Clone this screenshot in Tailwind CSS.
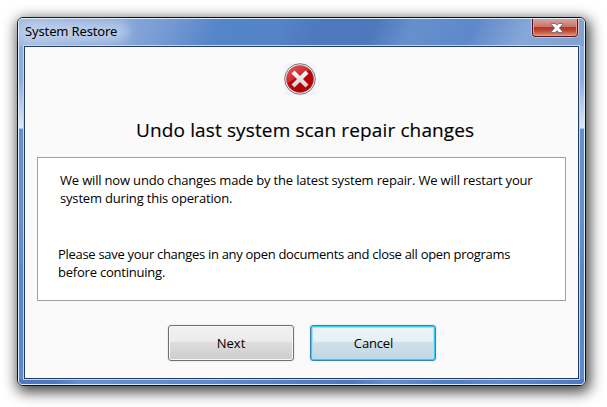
<!DOCTYPE html>
<html lang="en">
<head>
<meta charset="utf-8">
<title>System Restore</title>
<script src="https://cdn.jsdelivr.net/npm/@tailwindcss/browser@4"></script>
</head>
<body class="bg-white w-[607px] h-[407px] overflow-hidden pl-[17px] pt-[17px] text-black font-['Open_Sans','Noto_Sans',sans-serif]">
<div class="w-[569px] h-[369px] rounded-[6px] border border-[#080f1a] shadow-[2px_4px_14px_2px_rgba(0,0,0,0.75)]">
  <div class="relative w-full h-full rounded-[5px] border border-[#dcecf8] px-[4px] pb-[4px] flex flex-col bg-[linear-gradient(180deg,#8fabdc_0px,#8fabdc_60px,#dbe6f5_107px,#e0e9f5_109px,#668fcd_110px,#6690d0_200px,#5b87ca_260px,#5d8ace_100%)]">
    <div class="absolute inset-x-0 top-0 h-[27px] rounded-t-[4px] bg-[linear-gradient(115deg,#a1b9e1_0px,#8dabdb_90px,#7499d2_140px,#5485c9_185px,#5583c8_240px,#4d7abd_275px,#4d79bc_325px,#6690cd_360px,#5d89ca_415px,#87a7d8_465px,#80a1d2_520px,#8dacdc_570px)]"></div>
    <div class="absolute inset-x-0 bottom-0 h-[5px] rounded-b-[4px] bg-[linear-gradient(90deg,#4b78bf_0px,#4b78bf_35px,#6590d1_60px,#5e8acd_200px,#4c78bd_330px,#6590d0_370px,#4e7dc5_430px,#5f8bd0_480px,#4c79c0_100%)]"></div>
    <div class="relative h-[26px] shrink-0 flex justify-between">
      <div class="ml-[2px] mt-[4px] h-4 leading-4 text-[13px] tracking-[-0.14px] whitespace-nowrap font-['Noto_Sans',sans-serif]"><span class="absolute left-[-4px] top-[3px] w-[110px] h-[20px] rounded-full bg-white/35 blur-[5px]"></span><span class="relative">System Restore</span></div>
      <div class="mr-[1px] w-[48px] h-[19px] rounded-b-[5px] border border-t-0 border-[#e3b8bd] bg-[#4b1721] px-px pb-px">
        <div class="w-full h-full rounded-b-[3px] border border-t-0 border-[#df9c92] bg-[linear-gradient(180deg,#dba29d_0,#c9746b_48%,#b2342a_50%,#bd4130_70%,#dc8465_100%)] flex justify-center">
          <svg class="w-[12px] h-[10px] mt-[4px] ml-[4px]" viewBox="0 0 12 10"><path d="M.5.5h3.700L6 2.300 7.800.5h3.700v1L8.500 5l3 3.500v1H7.800L6 7.700 4.200 9.500H.5v-1L3.500 5l-3-3.500z" fill="#fff" stroke="#5a5f72" stroke-width=".8"/></svg>
        </div>
      </div>
    </div>
    <main class="relative flex-1 border border-[#c1d6f1]">
      <div class="w-full h-full border border-[#263b61] bg-[#fafafa] flex flex-col px-[12px]">
        <div class="mt-[16px] h-8 flex justify-center ml-[-3px]">
          <svg class="w-8 h-8 bg-[#f3f3fa]" viewBox="0 0 32 32">
            <defs><linearGradient id="red" x1="0" y1="0" x2=".6" y2="1"><stop offset="0" stop-color="#e06060"/><stop offset=".48" stop-color="#cf2b2e"/><stop offset=".52" stop-color="#b80009"/><stop offset="1" stop-color="#b40307"/></linearGradient>
            <linearGradient id="cross" x1="0" y1="0" x2="0" y2="1"><stop offset="0" stop-color="#fff"/><stop offset="1" stop-color="#cfcfcf"/></linearGradient></defs>
            <circle cx="16" cy="16" r="15.300" fill="#f4f4f4" stroke="#777" stroke-width="1"/>
            <circle cx="16" cy="16" r="13.600" fill="url(#red)" stroke="#bb4a4a" stroke-width=".6"/>
            <path d="M10.500 7.500 16 13l5.500-5.500 3 3L19 16l5.500 5.500-3 3L16 19l-5.500 5.500-3-3L13 16l-5.500-5.500z" fill="url(#cross)"/>
          </svg>
        </div>
        <h1 class="mt-[22px] h-[26px] pl-[99px] leading-[26px] text-[19px] tracking-[0.13px] [-webkit-text-stroke:0.15px_black] whitespace-nowrap">Undo last system scan repair changes</h1>
        <section class="mt-[14px] h-[144px] w-[529px] border border-[#a0a0a0] bg-white text-[13px] leading-[18px] whitespace-nowrap">
          <p class="mt-[13px] ml-[22px] tracking-[-0.175px]"><span>We will now undo changes made by the latest system repair. We will restart your</span><br><span>system during this operation.</span></p>
          <p class="mt-[38px] ml-[20px]"><span class="tracking-[-0.3px]">Please save your changes in any open documents and close all open programs</span><br><span class="tracking-[-0.22px]">before continuing.</span></p>
        </section>
        <div class="mt-[24px] ml-[131px] flex gap-[16px] text-[13px]">
          <button class="w-[126px] h-[36px] pt-[2px] rounded-[3px] border border-[#707070] bg-[linear-gradient(180deg,#f2f2f2_0,#ebebeb_47%,#dddddd_48%,#cdcdcd_100%)] shadow-[inset_0_0_0_1px_#f8f8f8,0_0_0_1px_#f0f0f0]">Next</button>
          <button class="w-[126px] h-[36px] pt-[2px] pl-[7px] rounded-[3px] border border-[#3c7fb1] bg-[linear-gradient(180deg,#eef4f6_0,#e6f0f4_47%,#d0e1ea_48%,#c1d6e2_100%)] shadow-[inset_0_0_0_1px_#35cdf5,inset_0_0_0_2px_#a6e3f4,0_0_0_1px_#f0f0f0] tracking-[-0.15px]"><span class="mr-[6px]">Cancel</span></button>
        </div>
      </div>
    </main>
  </div>
</div>
</body>
</html>
